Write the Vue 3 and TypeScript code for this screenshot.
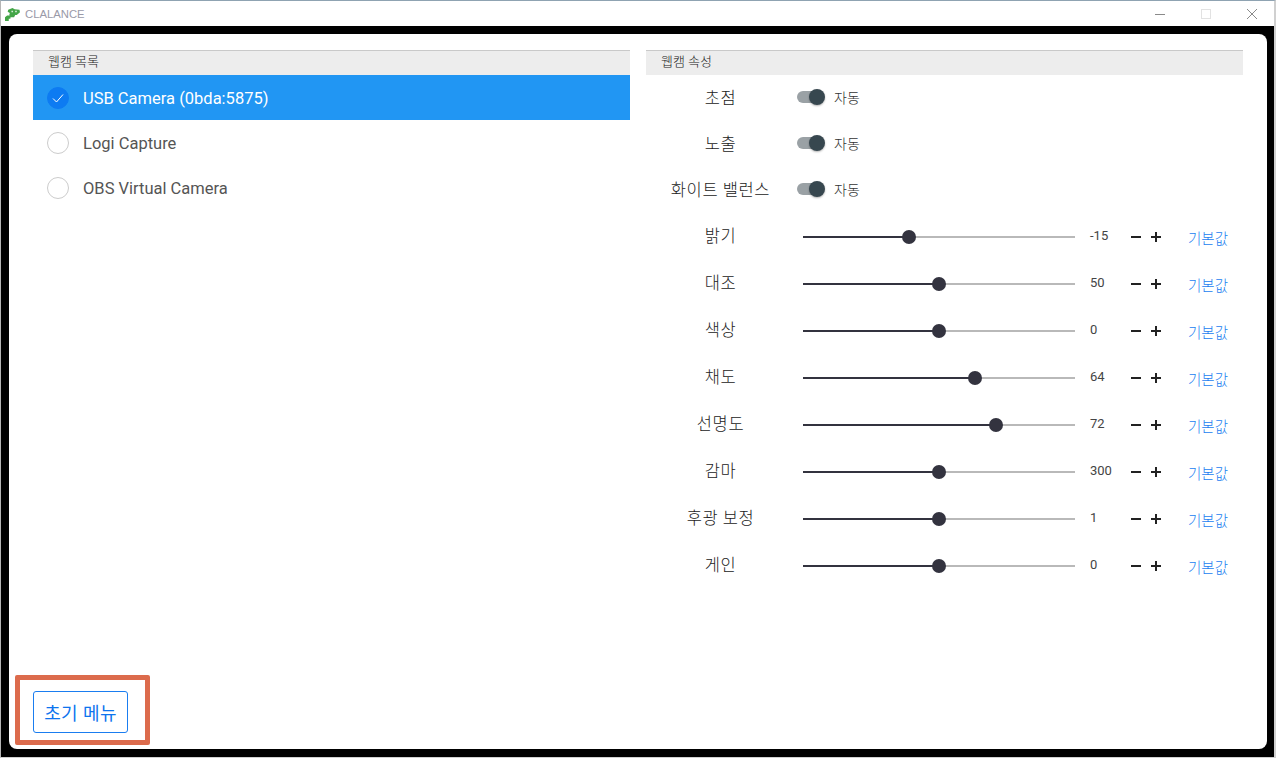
<script setup lang="ts">
interface Cam { name: string; selected?: boolean }
interface Slide { label: string; value: number; text: string; pos: number }

const cams: Cam[] = [
  { name: 'USB Camera (0bda:5875)', selected: true },
  { name: 'Logi Capture' },
  { name: 'OBS Virtual Camera' },
]
const toggles = ['초점', '노출', '화이트 밸런스']
const slides: Slide[] = [
  { label: '밝기', value: -15, text: '-15', pos: 106 },
  { label: '대조', value: 50, text: '50', pos: 136 },
  { label: '색상', value: 0, text: '0', pos: 136 },
  { label: '채도', value: 64, text: '64', pos: 172 },
  { label: '선명도', value: 72, text: '72', pos: 193 },
  { label: '감마', value: 300, text: '300', pos: 136 },
  { label: '후광 보정', value: 1, text: '1', pos: 136 },
  { label: '게인', value: 0, text: '0', pos: 136 },
]
</script>

<template>
  <div class="window">
    <header class="titlebar">
      <svg class="logo" width="15" height="13" viewBox="0 0 14 12">
        <path d="M3 1.500L7 0l2 1 4.500.5.500 2.500L11 6.500H9.500L8.500 8.500H5L4 6.500l.5-2-2-1z" fill="#43a547" />
        <path d="M0 8.500l2-1.500h3.500L5 10H3.500v2H0z" fill="#43a547" />
        <path d="M6 2.500h1.500V4H6zM9.500 2.500H11V4H9.500z" fill="#d5ebd5" />
      </svg>
      <span class="app-name">CLALANCE</span>
      <div class="win-btns">
        <svg width="12" height="12" viewBox="0 0 12 12"><path d="M1 6.500h10" stroke="#8a8a8a" /></svg>
        <svg width="12" height="12" viewBox="0 0 12 12"><rect x="1.500" y="1.500" width="9" height="9" fill="none" stroke="#e2e2e2" /></svg>
        <svg width="12" height="12" viewBox="0 0 12 12"><path d="M1 1l10 10M11 1L1 11" stroke="#8a8a8a" /></svg>
      </div>
    </header>

    <div class="frame">
      <main class="sheet">
        <div class="columns">
          <section class="panel">
            <h2 class="panel-head">웹캠 목록</h2>
            <ul class="cams">
              <li v-for="c in cams" :key="c.name" class="cam" :class="{ selected: c.selected }">
                <span class="radio">
                  <svg v-if="c.selected" width="14" height="12" viewBox="0 0 14 12">
                    <path d="M2 6.500l3.500 3.500L12 2.500" fill="none" stroke="#fff" stroke-width="1" />
                  </svg>
                </span>
                <span class="cam-name">{{ c.name }}</span>
              </li>
            </ul>
          </section>

          <section class="panel">
            <h2 class="panel-head">웹캠 속성</h2>
            <div class="props">
              <div v-for="t in toggles" :key="t" class="prop toggle-row">
                <span class="prop-label">{{ t }}</span>
                <span class="switch"><span class="switch-track"></span><span class="switch-knob"></span></span>
                <span class="auto">자동</span>
              </div>
              <div v-for="s in slides" :key="s.label" class="prop slide-row">
                <span class="prop-label">{{ s.label }}</span>
                <span class="slider">
                  <span class="slider-fill" :style="{ width: s.pos + 'px' }"></span>
                  <span class="slider-thumb" :style="{ left: s.pos + 'px' }"></span>
                </span>
                <span class="value">{{ s.text }}</span>
                <span class="step">
                  <svg width="12" height="12" viewBox="0 0 12 12"><path d="M1 6h10" stroke="#222" stroke-width="2" /></svg>
                  <svg width="12" height="12" viewBox="0 0 12 12"><path d="M1 6h10M6 1v10" stroke="#222" stroke-width="2" /></svg>
                </span>
                <a class="reset">기본값</a>
              </div>
            </div>
          </section>
        </div>

        <div class="footer">
          <button class="home-btn" type="button">초기 메뉴</button>
          <span class="callout"></span>
        </div>
      </main>
    </div>
  </div>
</template>

<style>
html, body {
  margin: 0;
  background: #fff;
}
</style>

<style scoped>
.window {
  box-sizing: border-box;
  width: 1276px;
  height: 758px;
  display: flex;
  flex-direction: column;
  background: #fff;
  border-top: 1px solid #8fa3b2;
  border-left: 1px solid #b5b5b5;
  border-right: 2px solid #d0d0d0;
  border-bottom: 1px solid #d0d0d0;
  font-family: Roboto, "Noto Sans CJK KR", sans-serif;
  color: #333;
}
.titlebar {
  height: 25px;
  flex: none;
  display: flex;
  align-items: center;
  padding-left: 4px;
}
.logo {
  margin-right: 5px;
  margin-top: 1px;
}
.app-name {
  font-family: "Liberation Sans", sans-serif;
  font-size: 11.300px;
  color: #9a9aa8;
}
.win-btns {
  margin-left: auto;
  display: flex;
  gap: 34px;
  padding-right: 16px;
  align-items: center;
}
.frame {
  flex: 1;
  min-height: 0;
  display: flex;
  background: #000;
  padding: 8px 7px 8px 8px;
}
.sheet {
  flex: 1;
  min-width: 0;
  display: flex;
  flex-direction: column;
  background: #fff;
  border-radius: 8px;
  padding: 16px 24px 16px 24px;
}
.columns {
  flex: 1;
  display: grid;
  grid-template-columns: 597px 597px;
  gap: 16px;
  align-content: start;
}
.panel-head {
  box-sizing: border-box;
  height: 25px;
  margin: 0;
  padding: 3px 0 0 15px;
  background: #ededed;
  border-top: 1px solid #c9c9c9;
  font-size: 13px;
  line-height: 16px;
  font-weight: 300;
  color: #222;
}
.cams {
  list-style: none;
  margin: 0;
  padding: 0;
}
.cam {
  height: 45px;
  display: flex;
  align-items: center;
  padding-left: 14px;
  font-size: 16.500px;
  color: #555;
}
.cam-name {
  padding-top: 2px;
}
.cam.selected {
  background: #2196f3;
  color: #fff;
}
.radio {
  box-sizing: border-box;
  width: 22px;
  height: 22px;
  border-radius: 50%;
  border: 1px solid #ccc;
  background: #fff;
  margin-right: 14px;
  display: flex;
  align-items: center;
  justify-content: center;
}
.selected .radio {
  background: #0d7bf2;
  border-color: #0d7bf2;
}
.props {
  display: flex;
  flex-direction: column;
}
.prop {
  display: flex;
  align-items: center;
}
.toggle-row {
  height: 46px;
}
.toggle-row:first-child {
  height: 44px;
  margin-bottom: 1px;
}
.toggle-row:nth-child(3) {
  margin-bottom: 1px;
}
.slide-row {
  height: 47px;
}
.prop-label {
  width: 149px;
  text-align: center;
  font-size: 16.500px;
  font-weight: 300;
  letter-spacing: 0.6px;
  color: #222;
  flex: none;
}
.slide-row .prop-label {
  padding-bottom: 3px;
}
.switch {
  position: relative;
  width: 28px;
  height: 14px;
  margin-left: 2px;
  flex: none;
}
.switch-track {
  position: absolute;
  left: 0;
  right: 3px;
  top: 1px;
  height: 12px;
  border-radius: 6px;
  background: #9aa1a5;
}
.switch-knob {
  position: absolute;
  right: 0;
  top: -1px;
  width: 16px;
  height: 16px;
  border-radius: 50%;
  background: #37474f;
  box-shadow: 0 1px 2px rgba(0, 0, 0, 0.3);
}
.auto {
  margin-left: 9px;
  font-size: 14px;
  font-weight: 300;
  color: #333;
}
.slider {
  position: relative;
  flex: none;
  width: 272px;
  height: 2px;
  margin-left: 8px;
  margin-top: 1px;
  background: #b9b9b9;
}
.slider-fill {
  position: absolute;
  left: 0;
  top: 0;
  height: 2px;
  background: #33333f;
}
.slider-thumb {
  position: absolute;
  top: -6px;
  width: 14px;
  height: 14px;
  margin-left: -7px;
  border-radius: 50%;
  background: #33333f;
}
.value {
  width: 40px;
  margin-left: 15px;
  font-size: 13px;
  color: #444;
  flex: none;
  padding-bottom: 2px;
}
.step {
  display: flex;
  gap: 8px;
  flex: none;
  padding-top: 1px;
}
.reset {
  margin-left: 26px;
  font-size: 14.500px;
  color: #1a7df0;
  font-weight: 300;
  padding-top: 1px;
}
.footer {
  position: relative;
  flex: none;
}
.home-btn {
  display: block;
  box-sizing: border-box;
  width: 95px;
  height: 42px;
  background: #fff;
  border: 1px solid #1a7df0;
  border-radius: 3px;
  color: #0d74ee;
  font-family: inherit;
  font-size: 18px;
  font-weight: 400;
  letter-spacing: 0.4px;
  padding: 0;
}
.callout {
  position: absolute;
  left: -18px;
  top: -16px;
  width: 135px;
  height: 70px;
  box-sizing: border-box;
  border: 5px solid #dc6b4c;
  border-radius: 2px;
  pointer-events: none;
}
</style>
